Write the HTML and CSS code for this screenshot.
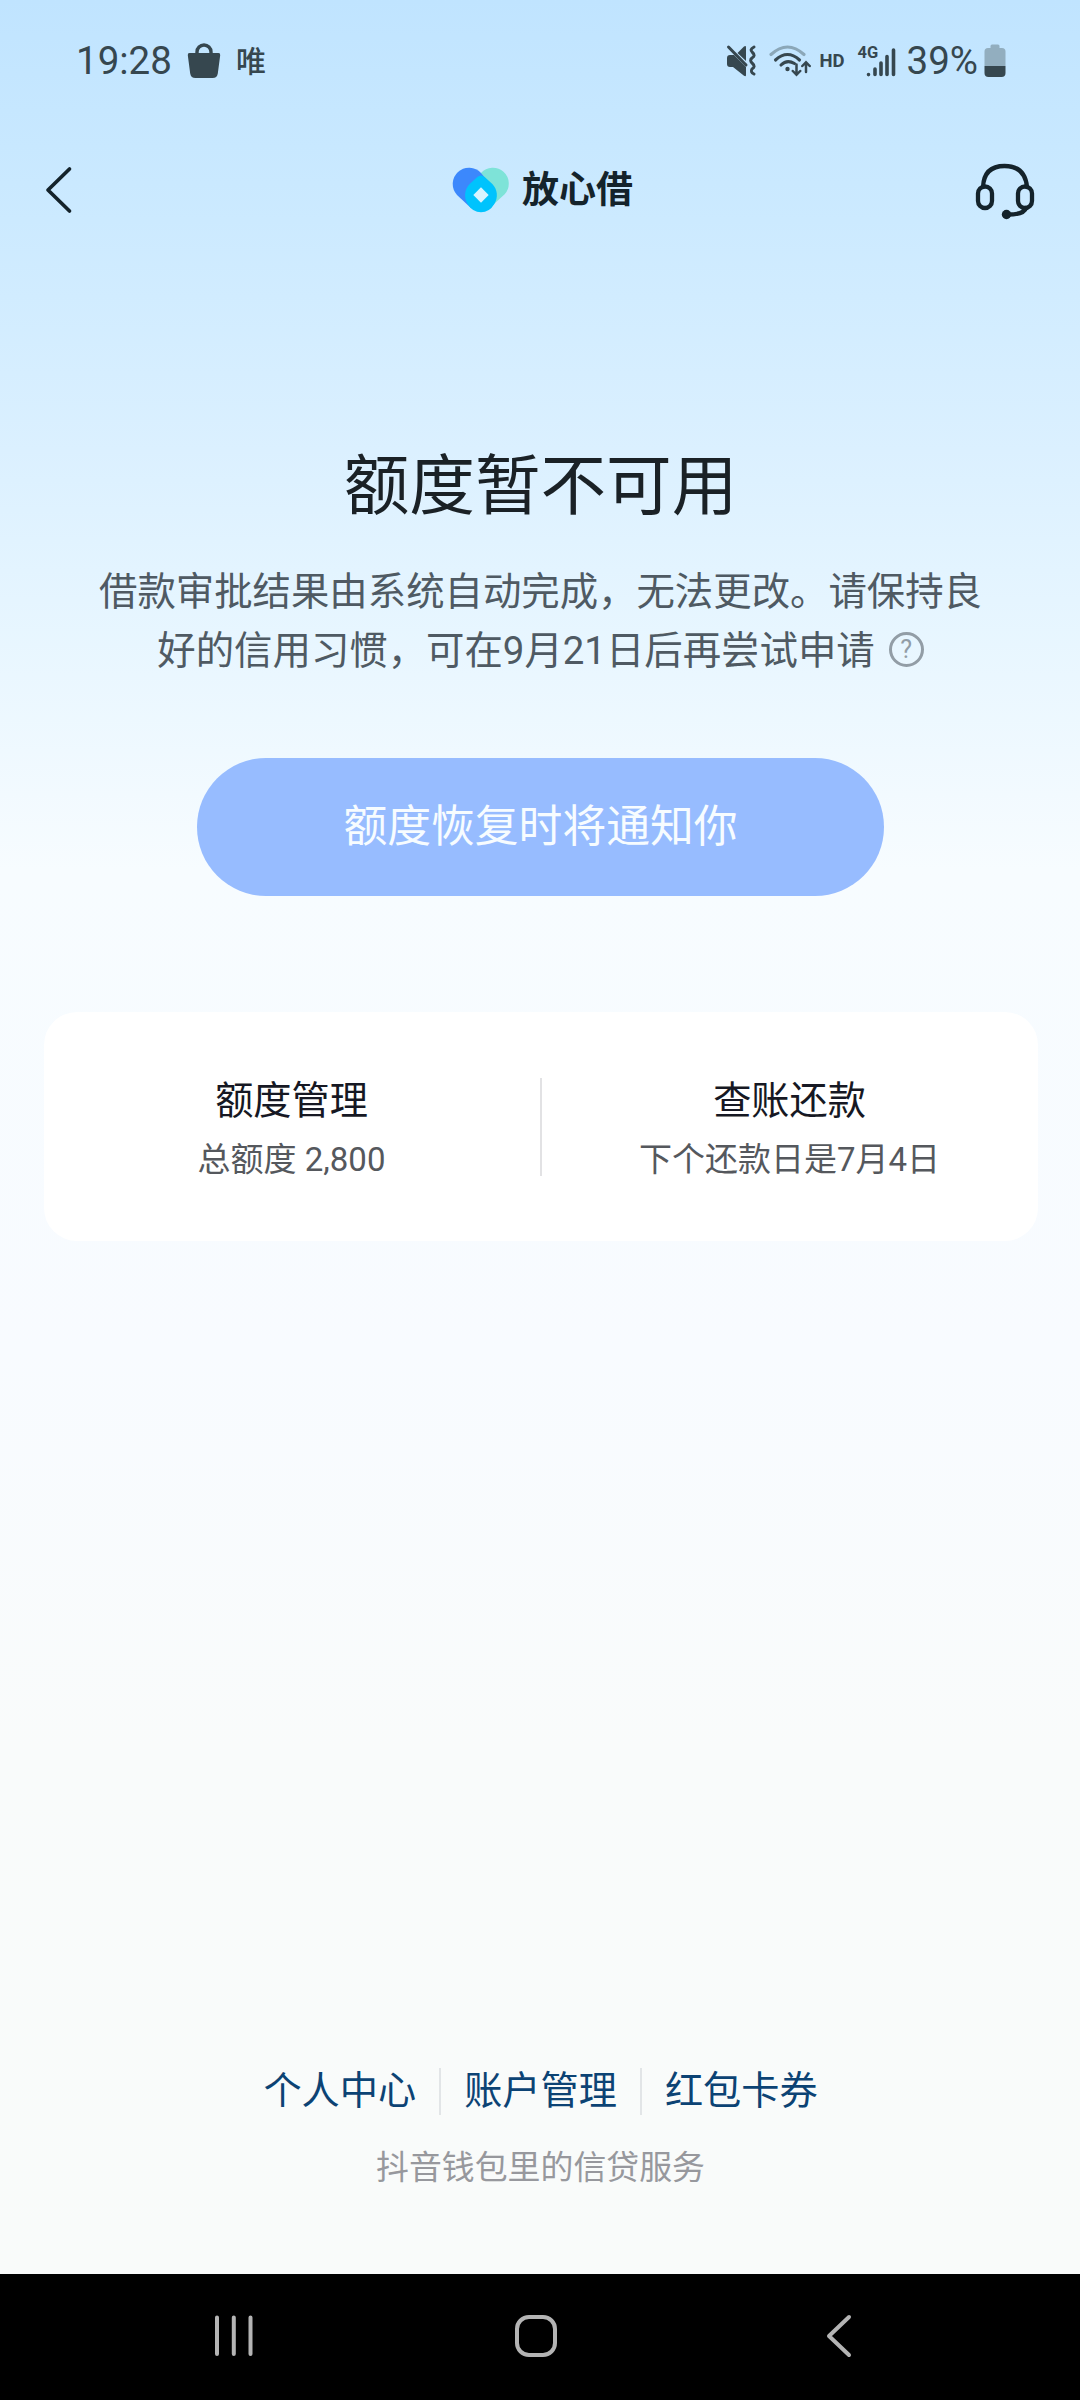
FILE: index.html
```html
<!DOCTYPE html>
<html lang="zh-CN">
<head>
<meta charset="utf-8">
<title>放心借</title>
<link rel="stylesheet" href="styles.css">
</head>
<body>
<div class="status">
  <div class="status-left">
    <span class="clock">19:28</span>
    <svg class="bag" width="34" height="36" viewBox="0 0 34 36"><path d="M10 12V9a7 7 0 0 1 14 0v3" fill="none" stroke="#36474f" stroke-width="3.4"/><path d="M2.500 10h29q2 0 1.700 2.200l-2.400 18.300q-.7 4.500-5.200 4.500H8.400q-4.500 0-5.200-4.500L.8 12.200Q.5 10 2.500 10z" fill="#36474f"/></svg>
    <span class="notice">唯</span>
  </div>
  <div class="status-right">
    <svg class="mute" width="32" height="34" viewBox="0 0 32 34"><g fill="#36474f"><path d="M2 14q0-3 3-3h4l12 12v8q0 2-2 .8L8 23H5q-3 0-3-3z"/><path d="M12.500 9l6.500-6.400q2-1.500 2 .8V17z"/></g><path d="M3.500 3l17.500 18M29 3q-5 2.500-1.500 5.500t-.5 5.500q-3 2.500.5 5.500t-.5 5.500q-2 3 2 5" fill="none" stroke="#36474f" stroke-width="3" stroke-linecap="round"/></svg>
    <svg class="wifi" width="42" height="34" viewBox="0 0 42 34"><g fill="none" stroke="#36474f" stroke-width="3.100" stroke-linecap="round"><path d="M2 10.500q16.500-15 33 0" stroke="#8ba7b8"/><path d="M6.500 16q12-11 24 0M12 21q6-6 13.500-1.500"/><path d="M27.500 20.500v10M23.800 27l3.700 3.800 3.700-3.800M37 28V18.500M33.300 22l3.700-3.800 3.700 3.800" stroke-width="2.500"/></g><circle cx="18.500" cy="25" r="2.200" fill="#36474f"/></svg>
    <span class="hd">HD</span>
    <div class="cell">
      <span class="net">4G</span>
      <svg width="38" height="34" viewBox="0 0 38 34"><path d="M10.500 30.500v.1M17 25v5.500M23 19v11.500M29 12.500v18M35.500 6v24.500" fill="none" stroke="#36474f" stroke-width="3.600" stroke-linecap="round"/></svg>
    </div>
    <span class="percent">39%</span>
    <svg class="battery" width="22" height="34" viewBox="0 0 22 34"><path d="M6.500 4V2q0-1.500 1.500-1.500h6q1.500 0 1.500 1.500v2H18q3.500 0 3.500 3.500V22H.5V7.500Q.5 4 4 4z" fill="#92aebf"/><path d="M.5 22h21v7q0 4-4 4h-13q-4 0-4-4z" fill="#36474f"/></svg>
  </div>
</div>

<header class="header">
  <svg width="30" height="50" viewBox="0 0 30 50"><path d="M26.500 4L5 25l21.500 21" fill="none" stroke="#14232b" stroke-width="3.700" stroke-linecap="round" stroke-linejoin="round"/></svg>
  <div class="brand">
    <svg width="58" height="46" viewBox="0 0 174 138"><path d="M87 18A46 46 0 1 1 158 82L112 124 70 70z" fill="#7ee3d8"/><path d="M87 18A48 48 0 1 0 15 84L56 122 112 48z" fill="#3c88fc"/><path d="M53 51L76 30Q87 21 98 30L121 51C137 67 139 92 127 111Q112 136 87 136T47 111C35 92 37 67 53 51z" fill="#00c3fd"/><path d="M87 61l23 23-23 23-23-23z" fill="#d9f4ff"/></svg>
    <span class="brand-name">放心借</span>
  </div>
  <svg width="60" height="60" viewBox="0 0 60 60"><g fill="none" stroke="#14232b" stroke-width="4.300" stroke-linecap="round"><path d="M8 27Q9 6 29.500 6T52 27"/><rect x="3" y="26.500" width="14" height="21.500" rx="7"/><rect x="43" y="26.500" width="14" height="21.500" rx="7"/><path d="M51 48Q49 54.500 33 54.500"/></g><circle cx="31.500" cy="54.500" r="4.700" fill="#14232b"/></svg>
</header>

<main class="main">
  <h1 class="title">额度暂不可用</h1>
  <p class="desc">借款审批结果由系统自动完成，无法更改。请保持良<br>好的信用习惯，可在9月21日后再尝试申请<span class="help">?</span></p>
  <button class="notify" disabled>额度恢复时将通知你</button>
  <section class="card">
    <div class="entry"><div class="entry-title">额度管理</div><div class="entry-sub">总额度 2,800</div></div>
    <div class="rule"></div>
    <div class="entry"><div class="entry-title">查账还款</div><div class="entry-sub">下个还款日是7月4日</div></div>
  </section>
</main>

<footer class="footer">
  <div class="links"><a>个人中心</a><a>账户管理</a><a>红包卡券</a></div>
  <div class="slogan">抖音钱包里的信贷服务</div>
</footer>

<nav class="nav">
  <svg width="42" height="46" viewBox="0 0 42 46"><path d="M4 4.500v36.500M20.800 4.500v36.500M37.500 4.500v36.500" stroke="#b4b4b4" stroke-width="4" stroke-linecap="round"/></svg>
  <svg class="home" width="46" height="46" viewBox="0 0 46 46"><rect x="4" y="4" width="38" height="38" rx="12" fill="none" stroke="#b4b4b4" stroke-width="4"/></svg>
  <svg width="28" height="46" viewBox="0 0 28 46"><path d="M24 4L4 23l20 19" fill="none" stroke="#b4b4b4" stroke-width="4" stroke-linecap="round" stroke-linejoin="round"/></svg>
</nav>
</body>
</html>
```
FILE: styles.css
```css
* { box-sizing: border-box; }
body {
  margin: 0;
  width: 1080px;
  height: 2400px;
  display: flex;
  flex-direction: column;
  overflow: hidden;
  font-family: Roboto, "Noto Sans CJK SC", sans-serif;
  background: linear-gradient(180deg, #c0e4ff 0, #cceaff 220px, #dbf0ff 450px, #e5f5ff 600px, #f7fcff 870px, #f8fbff 1350px, #f9fbfb 1750px, #f9fbfa 2274px);
}
svg { display: block; flex: none; }

.status {
  height: 122px;
  padding: 0 74px 0 76px;
  display: flex;
  align-items: center;
  justify-content: space-between;
  color: #36474f;
  line-height: 48px;
}
.status-left, .status-right { display: flex; align-items: center; }
.clock, .percent { font-size: 38.500px; }
.bag { margin-left: 15px; }
.notice { margin-left: 15px; padding-top: 2px; font-size: 30px; font-weight: 500; }
.wifi { margin-left: 12px; }
.hd { margin-left: 8px; font-size: 18.500px; font-weight: 700; }
.cell { position: relative; margin-left: 13px; }
.net { position: absolute; left: 0; top: 1px; font-size: 16.500px; font-weight: 700; line-height: 16px; }
.percent { margin-left: 11px; }
.battery { margin-left: 6px; }

.header {
  height: 136px;
  padding: 0 45px 0 43px;
  display: grid;
  grid-template-columns: 60px 1fr 60px;
  align-items: center;
}
.brand { display: flex; align-items: center; justify-content: center; gap: 12px; padding-left: 7px; }
.brand-name { padding-top: 2px; font-size: 37px; font-weight: 700; line-height: 48px; color: #14232b; }

.main { padding: 181px 42px 0 43px; display: flex; flex-direction: column; align-items: center; }
.title { margin: 0; font-size: 65.600px; font-weight: 400; line-height: 96px; color: #1a2126; }
.desc { margin: 28px 0 0; font-size: 38.400px; line-height: 58.600px; color: #4f5a63; text-align: center; white-space: nowrap; }
.help {
  display: inline-flex;
  align-items: center;
  justify-content: center;
  width: 35px;
  height: 35px;
  margin-top: -6px;
  margin-left: 14px;
  border: 3px solid #929da6;
  border-radius: 50%;
  font-size: 25px;
  line-height: 29px;
  color: #929da6;
  vertical-align: 6px;
}
.notify {
  width: 687px;
  height: 138px;
  margin-top: 78px;
  padding: 0;
  border: 0;
  border-radius: 69px;
  background: #97bcff;
  color: #f7fcff;
  font: 400 43.800px/60px Roboto, "Noto Sans CJK SC", sans-serif;
}
.card {
  width: 994px;
  height: 229px;
  margin-top: 116px;
  border-radius: 33px;
  background: #fff;
  display: flex;
  align-items: center;
}
.entry { flex: 1; padding-top: 8px; text-align: center; }
.entry-title { font-size: 38.200px; line-height: 58px; color: #161823; }
.entry-sub { font-size: 33px; line-height: 60px; color: #55585d; }
.rule { width: 2px; height: 98px; background: #e2e2e4; }

.footer { margin-top: auto; height: 206px; padding-left: 1px; text-align: center; }
.links { display: flex; justify-content: center; align-items: center; font-size: 38.200px; line-height: 47px; color: #0c4374; }
.links a { padding: 0 23px; }
.links a + a { border-left: 2px solid #e2e5e7; }
.slogan { margin-top: 30px; font-size: 32.900px; line-height: 46px; color: #97989d; }

.nav {
  height: 126px;
  padding: 0 227px 2px 213px;
  background: #000;
  display: flex;
  align-items: center;
  justify-content: space-between;
}
.home { margin-right: 8px; }
```
